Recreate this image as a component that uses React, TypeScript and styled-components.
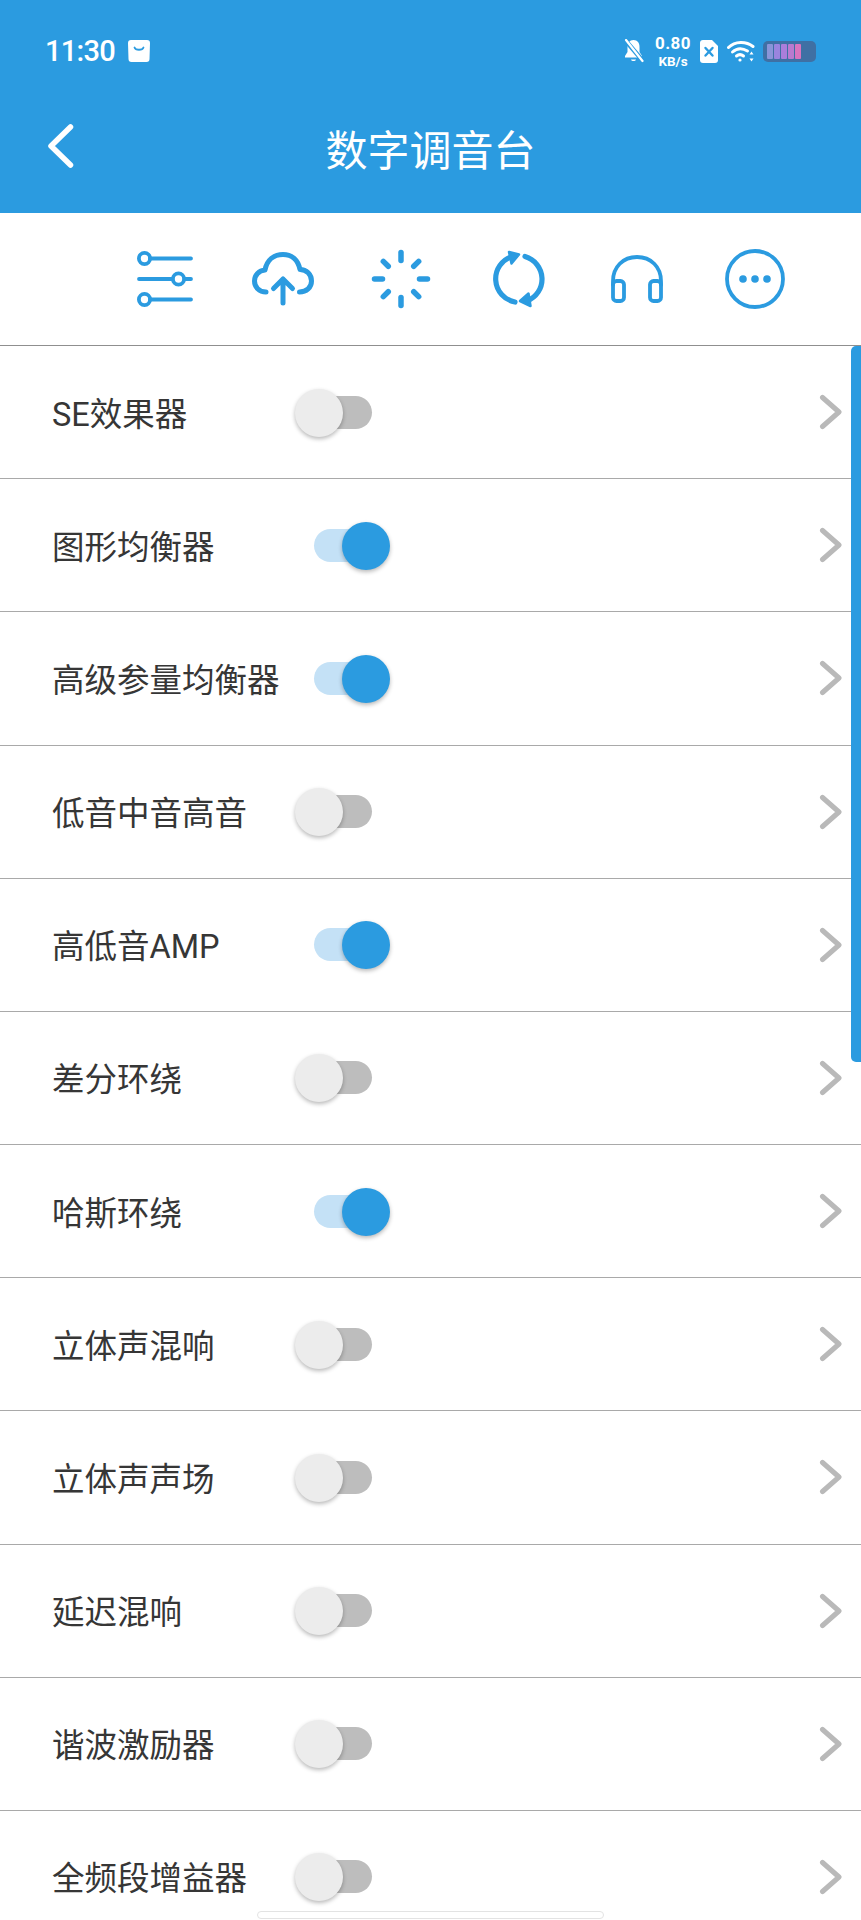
import React from 'react';
import styled, { createGlobalStyle } from 'styled-components';

const BLUE = '#2b9be0';

const GlobalStyle = createGlobalStyle`
  html, body {
    margin: 0;
    padding: 0;
    background: #fff;
  }
  body {
    font-family: Roboto, "Noto Sans CJK SC", sans-serif;
  }
`;

const Page = styled.div`
  position: relative;
  width: 861px;
  height: 1920px;
  overflow: hidden;
  background: #fff;
`;

const Header = styled.header`
  height: 213px;
  background: ${BLUE};
  color: #fff;
  display: flex;
  flex-direction: column;
`;

const StatusBar = styled.div`
  height: 102px;
  padding: 0 45px;
  display: flex;
  align-items: center;
  justify-content: space-between;
`;

const StatusLeft = styled.div`
  display: flex;
  align-items: center;
  gap: 13px;
`;

const Clock = styled.span`
  font-size: 29px;
  font-weight: 500;
  letter-spacing: -0.7px;
`;

const StatusRight = styled.div`
  display: flex;
  align-items: center;
`;

const Speed = styled.div`
  display: flex;
  flex-direction: column;
  align-items: center;
  width: 38px;
  margin: 0 8px 0 10px;
  font-weight: 700;
`;

const SpeedValue = styled.span`
  font-size: 17px;
  line-height: 20px;
  letter-spacing: 0.4px;
`;

const SpeedUnit = styled.span`
  font-size: 13.5px;
  line-height: 16px;
`;

const WifiIcon = styled.svg`
  margin-left: 9px;
`;

const Battery = styled.div`
  width: 53px;
  height: 21px;
  margin-left: 8px;
  padding: 3px 4px;
  box-sizing: border-box;
  border-radius: 5px;
  background: #3f70a4;
  display: flex;
  gap: 1px;
`;

const BatteryCell = styled.span<{ $color: string }>`
  width: 6px;
  border-radius: 1px;
  background: ${(p) => p.$color};
`;

const NavBar = styled.div`
  position: relative;
  height: 111px;
  padding-bottom: 20px;
  box-sizing: border-box;
  display: flex;
  align-items: center;
  justify-content: center;
`;

const BackButton = styled.svg`
  position: absolute;
  left: 44px;
  top: 19px;
`;

const Title = styled.h1`
  margin: 0;
  font-size: 42px;
  font-weight: 400;
`;

const Toolbar = styled.div`
  height: 132px;
  padding-left: 106px;
  display: flex;
  align-items: center;
`;

const ToolCell = styled.div`
  width: 118px;
  display: flex;
  justify-content: center;
  color: ${BLUE};
`;

const List = styled.ul`
  margin: 0;
  padding: 0;
  list-style: none;
  border-top: 1px solid #8f8f8f;
`;

const Row = styled.li`
  height: 132.18px;
  padding-left: 52px;
  display: flex;
  align-items: center;
  border-bottom: 1px solid #a9a9a9;
`;

const Label = styled.span`
  width: 243px;
  padding-bottom: 2px;
  font-size: 32.5px;
  color: #363636;
  white-space: nowrap;
`;

const Toggle = styled.div`
  position: relative;
  width: 95px;
  height: 48px;
  margin-top: 1px;
`;

const Track = styled.div<{ $on: boolean }>`
  position: absolute;
  left: 19px;
  top: 7px;
  width: 58px;
  height: 33px;
  border-radius: 17px;
  background: ${(p) => (p.$on ? '#c4e1f6' : '#bdbdbd')};
`;

const Thumb = styled.div<{ $on: boolean }>`
  position: absolute;
  top: 0;
  left: ${(p) => (p.$on ? '47px' : '0')};
  width: 48px;
  height: 48px;
  border-radius: 50%;
  background: ${(p) => (p.$on ? BLUE : '#ececec')};
  box-shadow: 0 2px 4px rgba(0, 0, 0, 0.28);
`;

const Chevron = styled.svg`
  margin-left: auto;
  margin-right: 18px;
`;

const ScrollBar = styled.div`
  position: absolute;
  right: 0;
  top: 346px;
  width: 10px;
  height: 716px;
  border-radius: 5px 0 0 5px;
  background: ${BLUE};
`;

const HomeBar = styled.div`
  position: absolute;
  left: 257px;
  top: 1911px;
  width: 347px;
  height: 8px;
  box-sizing: border-box;
  border: 1px solid #e3e3e3;
  border-radius: 4px;
  background: #fff;
`;

const rows = [
  { label: 'SE效果器', on: false },
  { label: '图形均衡器', on: true },
  { label: '高级参量均衡器', on: true },
  { label: '低音中音高音', on: false },
  { label: '高低音AMP', on: true },
  { label: '差分环绕', on: false },
  { label: '哈斯环绕', on: true },
  { label: '立体声混响', on: false },
  { label: '立体声声场', on: false },
  { label: '延迟混响', on: false },
  { label: '谐波激励器', on: false },
  { label: '全频段增益器', on: false },
];

function SlidersIcon() {
  return (
    <svg width="56" height="56" viewBox="0 0 56 56" fill="none" stroke="currentColor" strokeWidth="3.8" strokeLinecap="round">
      <path d="M13 7.500h41M2 28h33M48 28h6M13 48.500h41" />
      <circle cx="7.500" cy="7.500" r="5.600" />
      <circle cx="41.500" cy="28" r="5.600" />
      <circle cx="7.500" cy="48.500" r="5.600" />
    </svg>
  );
}

function CloudIcon() {
  return (
    <svg width="62" height="54" viewBox="0 0 62 54" fill="none" stroke="currentColor" strokeWidth="5" strokeLinecap="round" strokeLinejoin="round">
      <path d="M14 40C7 40 2.500 35 2.500 29c0-6 4.500-10.500 10.500-11C15 8 22 2.500 31 2.500S46 8 48 17.500c6.500 0 11.500 5 11.500 11.500S54.500 40 47.500 40" />
      <path d="M31 51V27M21.500 36.500L31 27l9.500 9.500" />
    </svg>
  );
}

function SpinnerIcon() {
  const spokes = [0, 45, 90, 135, 180, 225, 270, 315];
  return (
    <svg width="60" height="60" viewBox="0 0 60 60" fill="none" stroke="currentColor" strokeWidth="5.5" strokeLinecap="round">
      {spokes.map((a) => (
        <path key={a} d={a % 90 === 0 ? 'M30 3.500v8' : 'M30 5v7'} transform={`rotate(${a} 30 30)`} />
      ))}
    </svg>
  );
}

function RefreshIcon() {
  return (
    <svg width="54" height="60" viewBox="0 0 54 60" fill="none" stroke="currentColor" strokeWidth="5.2" strokeLinecap="round">
      <path d="M20 7.500A23.500 23.500 0 0 0 23 53" />
      <path d="M33 7.500A23.500 23.500 0 0 1 35 52" />
      <path d="M17 3l10 2.500-7.500 9z" fill="currentColor" strokeWidth="2.500" strokeLinejoin="round" />
      <path d="M38.500 57l-10.500-5 8.500-7.500z" fill="currentColor" strokeWidth="2.500" strokeLinejoin="round" />
    </svg>
  );
}

function HeadphonesIcon() {
  return (
    <svg width="52" height="48" viewBox="0 0 52 48" fill="none" stroke="currentColor" strokeWidth="3.8" strokeLinecap="round" strokeLinejoin="round">
      <path d="M2 30V26C2 12 12 2 26 2s24 10 24 24v4" />
      <rect x="2" y="26" width="11" height="20" rx="3.500" />
      <rect x="39" y="26" width="11" height="20" rx="3.500" />
    </svg>
  );
}

function MoreIcon() {
  return (
    <svg width="60" height="60" viewBox="0 0 60 60" fill="none">
      <circle cx="30" cy="30" r="28" stroke="currentColor" strokeWidth="3.8" />
      <circle cx="18" cy="30" r="3.800" fill="currentColor" />
      <circle cx="30" cy="30" r="3.800" fill="currentColor" />
      <circle cx="42" cy="30" r="3.800" fill="currentColor" />
    </svg>
  );
}

export default function App() {
  return (
    <Page>
      <GlobalStyle />
      <Header>
        <StatusBar>
          <StatusLeft>
            <Clock>11:30</Clock>
            <svg width="22" height="22" viewBox="0 0 22 22">
              <path d="M3 0h16a3 3 0 0 1 3 3l-.5 16a3 3 0 0 1-3 3h-15a3 3 0 0 1-3-3L0 3a3 3 0 0 1 3-3z" fill="#fff" />
              <path d="M6.500 7.500c1 3 8 3 9 0" fill="none" stroke={BLUE} strokeWidth="1.800" strokeLinecap="round" />
            </svg>
          </StatusLeft>
          <StatusRight>
            <svg width="20" height="24" viewBox="0 0 20 24">
              <path d="M9.500 1c-4 0-6 3-6 7v5l-2.500 4v1.500h17V17l-2.500-4V8c0-4-2-7-6-7z" fill="#fff" />
              <path d="M7 20.500c.5 2 4.500 2 5 0z" fill="#fff" />
              <path d="M1.500 1.500l17 20" stroke={BLUE} strokeWidth="4.500" />
              <path d="M2 1l16.500 21" stroke="#fff" strokeWidth="2.200" strokeLinecap="round" />
            </svg>
            <Speed>
              <SpeedValue>0.80</SpeedValue>
              <SpeedUnit>KB/s</SpeedUnit>
            </Speed>
            <svg width="18" height="23" viewBox="0 0 18 23">
              <path d="M3 0h9l6 6v14a3 3 0 0 1-3 3H3a3 3 0 0 1-3-3V3a3 3 0 0 1 3-3z" fill="#fff" />
              <path d="M5.500 8l7 7.500M12.500 8l-7 7.500" stroke={BLUE} strokeWidth="2.400" strokeLinecap="round" />
            </svg>
            <WifiIcon width="28" height="22" viewBox="0 0 28 22" fill="none" stroke="#fff" strokeWidth="3" strokeLinecap="round">
              <path d="M1.500 7.500C8 1 19 1 26 6.500" />
              <path d="M5.500 12c4.500-4 10-4 15-1" />
              <path d="M9.500 16c2-1.600 5-1.600 7 0" />
              <circle cx="13" cy="20" r="1.600" fill="#fff" stroke="none" />
              <path d="M24.500 11.500l-2 3h4zM24.500 21.500l-2-3h4z" fill="#fff" stroke="none" />
            </WifiIcon>
            <Battery>
              {['#8a95d8', '#9a84de', '#aa7edb', '#ba7acf', '#da74bf'].map((c) => (
                <BatteryCell key={c} $color={c} />
              ))}
            </Battery>
          </StatusRight>
        </StatusBar>
        <NavBar>
          <BackButton width="34" height="48" viewBox="0 0 34 48" fill="none" stroke="#fff" strokeWidth="5.5" strokeLinecap="round" strokeLinejoin="round">
            <path d="M26.500 6L7 25l19.500 19" />
          </BackButton>
          <Title>数字调音台</Title>
        </NavBar>
      </Header>
      <Toolbar>
        <ToolCell><SlidersIcon /></ToolCell>
        <ToolCell><CloudIcon /></ToolCell>
        <ToolCell><SpinnerIcon /></ToolCell>
        <ToolCell><RefreshIcon /></ToolCell>
        <ToolCell><HeadphonesIcon /></ToolCell>
        <ToolCell><MoreIcon /></ToolCell>
      </Toolbar>
      <List>
        {rows.map((row) => (
          <Row key={row.label}>
            <Label>{row.label}</Label>
            <Toggle>
              <Track $on={row.on} />
              <Thumb $on={row.on} />
            </Toggle>
            <Chevron width="24" height="38" viewBox="0 0 24 38" fill="none" stroke="#b9b9b9" strokeWidth="5" strokeLinecap="round" strokeLinejoin="round">
              <path d="M3.500 4.500L20 19 3.500 33.500" />
            </Chevron>
          </Row>
        ))}
      </List>
      <ScrollBar />
      <HomeBar />
    </Page>
  );
}
